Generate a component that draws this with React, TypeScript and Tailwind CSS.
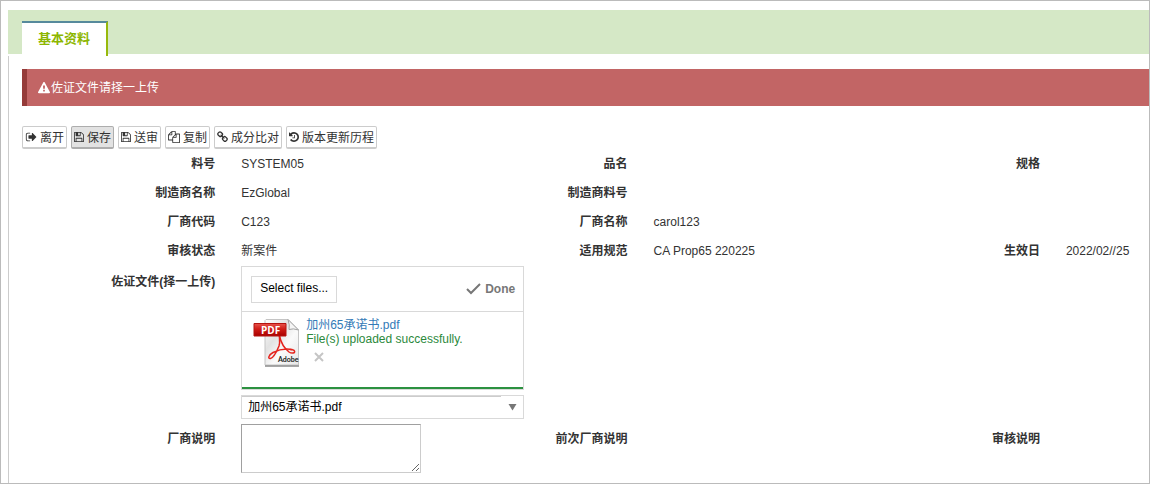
import type { ReactNode } from "react";

const ICONS = {
  signOut: {
    box: "0 0 1664 1792",
    d: "M704 1440q0 4 1 20t.5 26.5-3 23.5-10 19.5-20.5 6.5h-320q-119 0-203.5-84.5t-84.5-203.5v-704q0-119 84.5-203.5t203.5-84.5h320q13 0 22.5 9.5t9.5 22.5q0 4 1 20t.5 26.5-3 23.5-10 19.5-20.5 6.5h-320q-66 0-113 47t-47 113v704q0 66 47 113t113 47h312l11.5 1 11.5 3 8 5.5 7 9 2 13.5zm928-544q0 26-19 45l-544 544q-19 19-45 19t-45-19-19-45v-288h-448q-26 0-45-19t-19-45v-384q0-26 19-45t45-19h448v-288q0-26 19-45t45-19 45 19l544 544q19 19 19 45z",
  },
  save: {
    box: "128 0 1536 1792",
    d: "M512 1536h768v-384h-768v384zm896 0h128v-896q0-14-10-38.5t-20-34.5l-281-281q-10-10-34-20t-39-10v416q0 40-28 68t-68 28h-576q-40 0-68-28t-28-68v-416h-128v1280h128v-416q0-40 28-68t68-28h832q40 0 68 28t28 68v416zm-384-928v-320q0-13-9.5-22.5t-22.5-9.5h-192q-13 0-22.5 9.5t-9.5 22.5v320q0 13 9.5 22.5t22.5 9.5h192q13 0 22.5-9.5t9.5-22.5zm640 32v928q0 40-28 68t-68 28h-1344q-40 0-68-28t-28-68v-1344q0-40 28-68t68-28h928q40 0 88 20t76 48l280 280q28 28 48 76t20 88z",
  },
  files: {
    box: "0 0 1792 1792",
    d: "M1696 384q40 0 68 28t28 68v1216q0 40-28 68t-68 28h-960q-40 0-68-28t-28-68v-288h-544q-40 0-68-28t-28-68v-672q0-40 20-88t48-76l408-408q28-28 76-48t88-20h416q40 0 68 28t28 68v328q68-40 128-40h416zm-544 213l-299 299h299v-299zm-640-384l-299 299h299v-299zm196 647l316-316v-416h-384v416q0 40-28 68t-68 28h-416v640h512v-256q0-40 20-88t48-76zm956 804v-1152h-384v416q0 40-28 68t-68 28h-416v640h896z",
  },
  link: {
    box: "64 0 1664 1792",
    d: "M1520 1216q0-40-28-68l-208-208q-28-28-68-28-42 0-72 32 3 3 19 18.5t21.5 21.5 15 19 13 25.5 3.5 27.5q0 40-28 68t-68 28q-15 0-27.5-3.5t-25.5-13-19-15-21.5-21.5-18.5-19q-33 31-33 73 0 40 28 68l206 207q27 27 68 27 40 0 68-26l147-146q28-28 28-67zm-703-705q0-40-28-68l-206-207q-28-28-68-28-39 0-68 27l-147 146q-28 28-28 67 0 40 28 68l208 208q27 27 68 27 42 0 72-31-3-3-19-18.5t-21.5-21.5-15-19-13-25.5-3.5-27.5q0-40 28-68t68-28q15 0 27.5 3.5t25.5 13 19 15 21.5 21.5 18.5 19q33-31 33-73zm895 705q0 120-85 203l-147 146q-83 83-203 83-121 0-204-85l-206-207q-83-83-83-203 0-123 88-209l-88-88q-86 88-208 88-120 0-204-84l-208-208q-84-84-84-204t85-203l147-146q83-83 203-83 121 0 204 85l206 207q83 83 83 203 0 123-88 209l88 88q86-88 208-88 120 0 204 84l208 208q84 84 84 204z",
  },
  history: {
    box: "128 0 1536 1792",
    d: "M1664 896q0 156-61 298t-164 245-245 164-298 61q-172 0-327-72.5t-264-204.5q-7-10-6.5-22.5t8.5-20.5l137-138q10-9 25-9 16 2 23 12 73 95 179 147t225 52q104 0 198.5-40.5t163.5-109.5 109.5-163.5 40.5-198.5-40.5-198.5-109.5-163.5-163.5-109.5-198.5-40.5q-98 0-188 35.5t-160 101.5l137 138q31 30 14 69-17 40-59 40h-448q-26 0-45-19t-19-45v-448q0-42 40-59 39-17 69 14l130 129q107-101 244.5-156.5t284.5-55.5q156 0 298 61t245 164 164 245 61 298zm-640-288v448q0 14-9 23t-23 9h-320q-14 0-23-9t-9-23v-64q0-14 9-23t23-9h224v-352q0-14 9-23t23-9h64q14 0 23 9t9 23z",
  },
  warning: {
    box: "0 0 1792 1792",
    d: "M1024 1375v-190q0-14-9.5-23.5t-22.5-9.5h-192q-13 0-22.5 9.5t-9.5 23.5v190q0 14 9.5 23.5t22.5 9.5h192q13 0 22.5-9.5t9.5-23.5zm-2-374l18-459q0-12-10-19-13-11-24-11h-220q-11 0-24 11-10 7-10 21l17 457q0 10 10 16.5t24 6.5h185q14 0 23.5-6.5t10.5-16.5zm-14-934l768 1408q35 63-2 126-17 29-46.5 46t-63.5 17h-1536q-34 0-63.5-17t-46.5-46q-37-63-2-126l768-1408q17-31 47-49t65-18 65 18 47 49z",
  },
};

type IconName = keyof typeof ICONS;

function Icon({ name, className }: { name: IconName; className: string }) {
  return (
    <svg viewBox={ICONS[name].box} fill="currentColor" aria-hidden="true" className={className}>
      <path d={ICONS[name].d} />
    </svg>
  );
}

const ACTIONS: { icon: IconName; size: string; text: string; active?: boolean }[] = [
  { icon: "signOut", size: "h-3 w-3", text: "离开" },
  { icon: "save", size: "h-3 w-2.5", text: "保存", active: true },
  { icon: "save", size: "h-3 w-2.5", text: "送审" },
  { icon: "files", size: "h-3 w-3", text: "复制" },
  { icon: "link", size: "h-3 w-[11px]", text: "成分比对" },
  { icon: "history", size: "h-3 w-2.5", text: "版本更新历程" },
];

const FIELDS: [string, string][] = [
  ["料号", "SYSTEM05"],
  ["品名", ""],
  ["规格", ""],
  ["制造商名称", "EzGlobal"],
  ["制造商料号", ""],
  ["", ""],
  ["厂商代码", "C123"],
  ["厂商名称", "carol123"],
  ["", ""],
  ["审核状态", "新案件"],
  ["适用规范", "CA Prop65 220225"],
  ["生效日", "2022/02//25"],
];

function Caption({ children }: { children?: ReactNode }) {
  return <div className="py-1.5 pr-[13px] text-right font-bold whitespace-nowrap">{children}</div>;
}

function PdfIcon() {
  return (
    <svg width="47" height="50" viewBox="0 -1 47 50" aria-hidden="true" className="shrink-0 overflow-visible">
      <defs>
        <linearGradient id="paper" x1="0" y1="0" x2="1" y2="1">
          <stop offset="0" stopColor="#fff" />
          <stop offset="0.35" stopColor="#e2e2e2" />
          <stop offset="0.6" stopColor="#fafafa" />
          <stop offset="1" stopColor="#e6e6e6" />
        </linearGradient>
        <linearGradient id="banner" x1="0" y1="0" x2="0" y2="1">
          <stop offset="0" stopColor="#e8554d" />
          <stop offset="0.45" stopColor="#d01c16" />
          <stop offset="1" stopColor="#a80000" />
        </linearGradient>
      </defs>
      <path d="M13 0.500H35L45.500 11V46H12V1.500Z" fill="url(#paper)" stroke="#c4c4c4" />
      <path d="M12 47H46" stroke="#8a8a8a" strokeWidth="1.500" />
      <path d="M35 0.500Q37 6 36 10.500Q40 9 45.500 11Z" fill="#f5f5f5" stroke="#a2a2a2" />
      <g fill="none" stroke="#e5231d" strokeLinecap="round">
        <path
          d="M26.500 16C26 19 27.500 23 26 27C23.500 33 20 39 17.500 39.500C14.500 40 15.500 36 20 33.500C26 30.500 33 29.500 39 30.500"
          strokeWidth="1.500"
        />
        <path d="M26.500 17C28 24 31 29 36 33C39 35 42.500 34 41.500 32C41 31 39.500 30.500 37 30.500" strokeWidth="1.500" />
      </g>
      <path d="M1 4.500H33V17H1Z" fill="url(#banner)" stroke="#b41410" />
      <text x="8" y="15" fill="#fff" fontSize="10" fontWeight="bold" fontFamily="Open Sans, sans-serif">
        PDF
      </text>
      <text x="25" y="43" fill="#222" fontSize="7" fontWeight="bold" fontFamily="Lato, sans-serif">
        Adobe
      </text>
    </svg>
  );
}

export default function App() {
  return (
    <div className="min-h-screen overflow-hidden border border-[#bbb] bg-white pt-[9px] pl-[7px] font-['Liberation_Sans','Noto_Sans_CJK_SC',sans-serif] text-xs leading-[17px] text-[#333]">
      <div role="tablist" className="flex h-[46px] items-end border-b-2 border-white bg-[#d5e8c6] pl-3.5">
        <button
          type="button"
          role="tab"
          aria-selected="true"
          className="-mb-0.5 h-[35px] border-t-2 border-r-2 border-t-[#568a9c] border-r-[#97b90c] bg-white px-4 pb-0.5 text-[13px] font-bold text-[#8db600]"
        >
          基本资料
        </button>
      </div>

      <main className="border-l border-[#ccc] pt-[13px] pb-2.5 pl-[13px]">
        <div role="alert" className="flex h-[37px] items-center border-l-[5px] border-[#953b39] bg-[#c26565] pl-[11px] text-white">
          <Icon name="warning" className="size-3" />
          <span className="pt-0.5 pl-px">佐证文件请择一上传</span>
        </div>

        <div className="mt-5 mb-px flex flex-wrap gap-1">
          {ACTIONS.map((a) => (
            <button
              key={a.text}
              type="button"
              className={`flex h-[23px] items-center gap-[3px] rounded-[2px] border border-b-2 px-0.5 ${
                a.active ? "border-[#adadad] bg-[#e2e2e2]" : "border-[#ccc] bg-white"
              }`}
            >
              <Icon name={a.icon} className={a.size} />
              <span className="pt-0.5">{a.text}</span>
            </button>
          ))}
        </div>

        <div className="grid grid-cols-[minmax(0,206fr)_minmax(0,206fr)_minmax(0,206fr)_minmax(0,206fr)_minmax(0,206fr)_minmax(0,96fr)]">
          {FIELDS.map(([name, value], i) => (
            <div key={i} className="col-span-2 grid grid-cols-subgrid">
              <Caption>{name}</Caption>
              <div className="py-1.5 pl-[13px] whitespace-nowrap">{value}</div>
            </div>
          ))}

          <div className="pt-0.5">
            <Caption>
              <label htmlFor="evidence">佐证文件(择一上传)</label>
            </Caption>
          </div>
          <div className="col-span-5 pl-[13px]">
            <div className="w-[283px] max-w-full">
              <div className="h-[124px] border border-[#d9d9d9]">
                <div className="flex h-[45px] items-center justify-between border-b border-[#d9d9d9] pr-2 pl-[9px]">
                  <label className="relative flex h-[27px] cursor-pointer items-center border border-[#d9d9d9] px-2 pb-0.5 text-black">
                    <input id="evidence" type="file" aria-label="Select files..." className="sr-only" />
                    Select files...
                  </label>
                  <span className="flex items-center gap-1 font-bold text-[#777]">
                    <svg width="15" height="12" viewBox="0 0 15 12" aria-hidden="true">
                      <path d="M1 6L5 10L14 1" fill="none" stroke="currentColor" strokeWidth="2" />
                    </svg>
                    Done
                  </span>
                </div>
                <div className="flex h-[77px] gap-1.5 border-b-2 border-[#2c9140] pt-1.5 pl-[11px]">
                  <PdfIcon />
                  <div className="leading-[14px]">
                    <a href="#file" className="block text-[#337ab7]">
                      加州65承诺书.pdf
                    </a>
                    <span className="block text-[#2b893c]">File(s) uploaded successfully.</span>
                    <button type="button" aria-label="移除" className="mt-1.5 ml-2 block text-[#c5c5c5]">
                      <svg width="10" height="10" viewBox="0 0 10 10">
                        <path d="M1 1L9 9M9 1L1 9" stroke="currentColor" strokeWidth="2" />
                      </svg>
                    </button>
                  </div>
                </div>
              </div>

              <div className="relative mt-[5px] h-6 border border-[#d9d9d9]">
                <select
                  aria-label="已上传文件"
                  className="block h-full w-full appearance-none bg-white pl-1.5 text-black outline-none"
                >
                  <option>加州65承诺书.pdf</option>
                </select>
                <span className="pointer-events-none absolute top-0 right-[22px] left-0 h-px bg-[#ccc]" />
                <svg
                  width="9"
                  height="7"
                  viewBox="0 0 9 7"
                  aria-hidden="true"
                  className="pointer-events-none absolute top-2 right-1.5"
                >
                  <path d="M0.500 0H8.500L4.500 6.500Z" fill="#777" />
                </svg>
              </div>
            </div>
          </div>

          <div className="pt-1.5">
            <Caption>
              <label htmlFor="note">厂商说明</label>
            </Caption>
          </div>
          <div className="pt-[5px] pl-[13px]">
            <textarea
              id="note"
              className="block h-[49px] w-[180px] max-w-full border border-t-[#a0a0a0] border-r-[#ccc] border-b-[#ccc] border-l-[#a0a0a0] bg-white p-1 outline-none"
            />
          </div>
          <div className="pt-1.5">
            <Caption>前次厂商说明</Caption>
          </div>
          <div />
          <div className="pt-1.5">
            <Caption>审核说明</Caption>
          </div>
          <div />
        </div>
      </main>
    </div>
  );
}
